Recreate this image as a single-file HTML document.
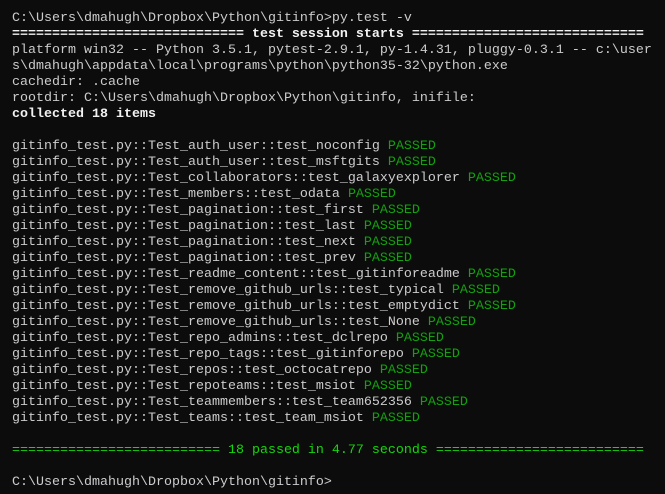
<!DOCTYPE html>
<html><head><style>
html,body{margin:0;background:#0c0c0c;width:665px;height:494px;overflow:hidden}
pre{margin:0;position:absolute;left:12px;top:11px;font-family:"Liberation Mono",monospace;font-size:13.33px;line-height:16px;color:#cccccc;white-space:pre}
b{color:#f2f2f2;font-weight:bold}
.p{color:#13a10e}
.g{color:#16d60c}
</style></head><body><pre>C:\Users\dmahugh\Dropbox\Python\gitinfo>py.test -v
<b>============================= test session starts =============================</b>
platform win32 -- Python 3.5.1, pytest-2.9.1, py-1.4.31, pluggy-0.3.1 -- c:\user
s\dmahugh\appdata\local\programs\python\python35-32\python.exe
cachedir: .cache
rootdir: C:\Users\dmahugh\Dropbox\Python\gitinfo, inifile:
<b>collected 18 items</b>

gitinfo_test.py::Test_auth_user::test_noconfig <span class="p">PASSED</span>
gitinfo_test.py::Test_auth_user::test_msftgits <span class="p">PASSED</span>
gitinfo_test.py::Test_collaborators::test_galaxyexplorer <span class="p">PASSED</span>
gitinfo_test.py::Test_members::test_odata <span class="p">PASSED</span>
gitinfo_test.py::Test_pagination::test_first <span class="p">PASSED</span>
gitinfo_test.py::Test_pagination::test_last <span class="p">PASSED</span>
gitinfo_test.py::Test_pagination::test_next <span class="p">PASSED</span>
gitinfo_test.py::Test_pagination::test_prev <span class="p">PASSED</span>
gitinfo_test.py::Test_readme_content::test_gitinforeadme <span class="p">PASSED</span>
gitinfo_test.py::Test_remove_github_urls::test_typical <span class="p">PASSED</span>
gitinfo_test.py::Test_remove_github_urls::test_emptydict <span class="p">PASSED</span>
gitinfo_test.py::Test_remove_github_urls::test_None <span class="p">PASSED</span>
gitinfo_test.py::Test_repo_admins::test_dclrepo <span class="p">PASSED</span>
gitinfo_test.py::Test_repo_tags::test_gitinforepo <span class="p">PASSED</span>
gitinfo_test.py::Test_repos::test_octocatrepo <span class="p">PASSED</span>
gitinfo_test.py::Test_repoteams::test_msiot <span class="p">PASSED</span>
gitinfo_test.py::Test_teammembers::test_team652356 <span class="p">PASSED</span>
gitinfo_test.py::Test_teams::test_team_msiot <span class="p">PASSED</span>

<span class="g">========================== 18 passed in 4.77 seconds ==========================</span>

C:\Users\dmahugh\Dropbox\Python\gitinfo></pre></body></html>
